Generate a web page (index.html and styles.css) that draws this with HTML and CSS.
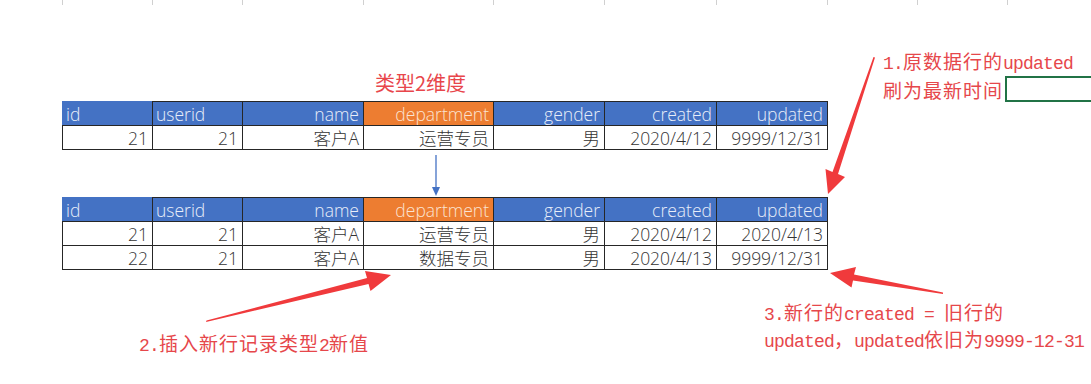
FILE: index.html
```html
<!DOCTYPE html>
<html lang="zh-CN">
<head>
<meta charset="utf-8">
<title>类型2维度</title>
<link rel="stylesheet" href="styles.css">
</head>
<body>
<div class="page">
  <div class="gridlines">
    <span class="gl w90"></span><span class="gl w90"></span><span class="gl w121"></span><span class="gl w130"></span><span class="gl w111"></span><span class="gl w112"></span><span class="gl w111"></span><span class="gl w90"></span><span class="gl w90"></span><span class="gl w90"></span>
  </div>

  <div class="sheet">
    <div class="dim-label-row"><span class="dim-label">类型2维度</span></div>

    <table class="tbl first">
      <colgroup><col class="c90"><col class="c90"><col class="c121"><col class="c130"><col class="c111"><col class="c112"><col class="c111"></colgroup>
      <tr><th class="l">id</th><th class="l">userid</th><th>name</th><th class="hl">department</th><th>gender</th><th>created</th><th>updated</th></tr>
      <tr><td>21</td><td>21</td><td>客户A</td><td>运营专员</td><td>男</td><td>2020/4/12</td><td>9999/12/31</td></tr>
    </table>

    <table class="tbl second">
      <colgroup><col class="c90"><col class="c90"><col class="c121"><col class="c130"><col class="c111"><col class="c112"><col class="c111"></colgroup>
      <tr><th class="l">id</th><th class="l">userid</th><th>name</th><th class="hl">department</th><th>gender</th><th>created</th><th>updated</th></tr>
      <tr><td>21</td><td>21</td><td>客户A</td><td>运营专员</td><td>男</td><td>2020/4/12</td><td>2020/4/13</td></tr>
      <tr><td>22</td><td>21</td><td>客户A</td><td>数据专员</td><td>男</td><td>2020/4/13</td><td>9999/12/31</td></tr>
    </table>
  </div>

  <div class="note note1"><span class="m">1.</span>原数据行的<span class="m">updated</span><br>刷为最新时间</div>
  <div class="selbox"></div>
  <div class="note note2"><span class="m">2.</span>插入新行记录类型<span class="m">2</span>新值</div>
  <div class="note note3"><span class="m">3.</span>新行的<span class="m">created = </span>旧行的<br><span class="m">updated</span>，<span class="m">updated</span>依旧为<span class="m">9999-12-31</span></div>

  <svg class="arrows" width="1091" height="384" viewBox="0 0 1091 384" xmlns="http://www.w3.org/2000/svg">
    <!-- blue arrow -->
    <line x1="436" y1="155" x2="436" y2="188" stroke="#4472c4" stroke-width="1.3"/>
    <polygon points="432,187 440,187 436,196" fill="#4472c4"/>
    <!-- red arrow 1 -->
    <polygon points="873.5,57 875,57.5 838,174 845,177 828,194 825.5,169 832.5,172" fill="#f03a3c"/>
    <!-- red arrow 2 -->
    <polygon points="206,322 206.5,320.5 367,278 365,271 391,275 370.5,291 368.5,284" fill="#f03a3c"/>
    <!-- red arrow 3 -->
    <polygon points="943,294 943,292.5 854,274.5 856,267 830,273 851.5,287.5 853,280.5" fill="#f03a3c"/>
  </svg>
</div>
</body>
</html>
```

FILE: styles.css
```css
html, body {
  margin: 0;
  padding: 0;
  background: #ffffff;
}

.page {
  position: relative;
  width: 1091px;
  height: 384px;
  overflow: hidden;
  font-family: "Noto Sans CJK SC", "Noto Sans", sans-serif;
}

.gridlines {
  display: flex;
  padding-left: 62px;
  height: 5px;
}

.gl {
  flex: none;
  height: 5px;
  border-left: 1px solid #d0d0d0;
  box-sizing: border-box;
}

.w90 { width: 90px; }
.w121 { width: 121px; }
.w130 { width: 130px; }
.w111 { width: 111px; }
.w112 { width: 112px; }

.sheet {
  padding-left: 62px;
}

.dim-label-row {
  height: 96px;
  display: flex;
  align-items: flex-end;
  padding-left: 313px;
}

.dim-label {
  color: #e8464b;
  font-size: 20px;
  line-height: 28px;
  margin-bottom: 4px;
}

.tbl {
  border-collapse: collapse;
  table-layout: fixed;
  width: 765px;
  font-family: "Open Sans", "Noto Sans CJK SC", sans-serif;
  font-size: 17.5px;
}

.tbl.second {
  margin-top: 47px;
}

.c90 { width: 90px; }
.c121 { width: 121px; }
.c130 { width: 130px; }
.c111 { width: 111px; }
.c112 { width: 112px; }

.tbl th,
.tbl td {
  height: 24px;
  padding: 0 4px 0 3px;
  line-height: 22px;
  text-align: right;
  white-space: nowrap;
  font-weight: 300;
  box-sizing: border-box;
  border: 1px solid #262626;
}

.tbl th {
  background: #4472c4;
  color: #e8eef9;
}

.tbl th.l {
  text-align: left;
}

.tbl th:first-child {
  border-top-color: #4472c4;
  border-left-color: #4472c4;
}

.tbl th.hl {
  background: #ed7d31;
  color: #fbe3d2;
}

.tbl td {
  color: #333333;
  background: #ffffff;
}

.note {
  position: absolute;
  color: #e6474b;
  font-size: 19px;
  line-height: 24px;
  letter-spacing: 1px;
  white-space: nowrap;
}

.note .m {
  font-family: "Liberation Mono", monospace;
  font-size: 18px;
  letter-spacing: -0.8px;
}

.note1 {
  left: 883px;
  top: 48px;
  line-height: 25px;
}

.note2 {
  left: 139px;
  top: 331px;
}

.note3 {
  left: 764px;
  top: 300px;
}

.selbox {
  position: absolute;
  left: 1005px;
  top: 76px;
  width: 100px;
  height: 26px;
  box-sizing: border-box;
  border: 2px solid #217346;
}

.arrows {
  position: absolute;
  left: 0;
  top: 0;
  pointer-events: none;
}
```
